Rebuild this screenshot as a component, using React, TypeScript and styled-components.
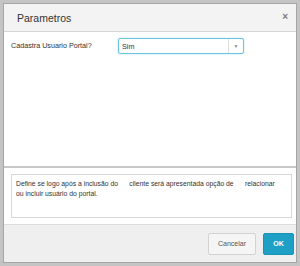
import React from "react";
import styled, { createGlobalStyle } from "styled-components";

const Global = createGlobalStyle`
  html, body { margin: 0; padding: 0; }
  body {
    background: #c4c4c4;
    font-family: "Liberation Sans", Arial, sans-serif;
    width: 300px;
    height: 266px;
    overflow: hidden;
  }
`;

const Dialog = styled.div`
  box-sizing: border-box;
  margin: 3px 0 0 3px;
  width: 294px;
  height: 260px;
  border: 1px solid #a6a6a6;
  display: flex;
  flex-direction: column;
  background: #fff;
`;

const Header = styled.div`
  box-sizing: border-box;
  height: 28px;
  flex: none;
  background: #f3f3f3;
  border-bottom: 1px solid #d6d6d6;
  display: flex;
  align-items: center;
  justify-content: space-between;
  padding: 0 8px 0 13px;
`;

const Title = styled.div`
  font-family: "Liberation Sans", Arial, sans-serif;
  font-size: 10.5px;
  color: #333;
`;

const Close = styled.div`
  font-size: 10px;
  font-weight: bold;
  color: #7a7a7a;
  line-height: 1;
  margin-top: -2px;
`;

const Body = styled.div`
  box-sizing: border-box;
  height: 136px;
  flex: none;
  padding: 6px 7px;
  border-bottom: 2px solid #c9c9c9;
`;

const Row = styled.div`
  display: flex;
  align-items: flex-start;
`;

const Label = styled.div`
  width: 107px;
  font-size: 7.2px;
  color: #333;
  padding-top: 3px;
`;

const Select = styled.div`
  box-sizing: border-box;
  width: 126px;
  height: 16px;
  border: 1px solid #6ac6e0;
  border-radius: 2px;
  box-shadow: 0 0 2px rgba(102, 197, 223, 0.5);
  display: flex;
  align-items: stretch;
  background: #fff;
`;

const SelectValue = styled.div`
  flex: 1;
  font-size: 7.2px;
  color: #333;
  display: flex;
  align-items: center;
  padding-left: 3px;
`;

const SelectArrow = styled.div`
  width: 14px;
  border-left: 1px solid #dedede;
  display: flex;
  align-items: center;
  justify-content: center;
  color: #888;
  font-size: 5px;
`;

const HelpArea = styled.div`
  box-sizing: border-box;
  height: 56px;
  flex: none;
  padding: 6px 4px 5px 7px;
`;

const HelpBox = styled.div`
  box-sizing: border-box;
  height: 44px;
  border: 1px solid #d8d8d8;
  padding: 4px 4px;
  font-size: 6.8px;
  line-height: 9.5px;
  color: #333;
  white-space: pre-wrap;
`;

const Footer = styled.div`
  box-sizing: border-box;
  flex: 1;
  background: #efefef;
  border-top: 1px solid #dcdcdc;
  display: flex;
  align-items: center;
  justify-content: flex-end;
  gap: 7px;
  padding: 0 2px 0 0;
`;

const Button = styled.div<{ $primary?: boolean }>`
  box-sizing: border-box;
  height: 22px;
  width: ${(p) => (p.$primary ? "31px" : "48px")};
  display: flex;
  align-items: center;
  justify-content: center;
  font-size: 7px;
  border-radius: 2px;
  background: ${(p) => (p.$primary ? "#1ea0c6" : "#f5f5f5")};
  color: ${(p) => (p.$primary ? "#fff" : "#555")};
  border: 1px solid ${(p) => (p.$primary ? "#1b93b6" : "#d3d3d3")};
  font-weight: ${(p) => (p.$primary ? "bold" : "normal")};
`;

export default function App() {
  return (
    <>
      <Global />
      <Dialog>
        <Header>
          <Title>Parametros</Title>
          <Close>×</Close>
        </Header>
        <Body>
          <Row>
            <Label>Cadastra Usuario Portal?</Label>
            <Select>
              <SelectValue>Sim</SelectValue>
              <SelectArrow>▼</SelectArrow>
            </Select>
          </Row>
        </Body>
        <HelpArea>
          <HelpBox>
            {"Define se logo após a inclusão do      cliente será apresentada opção de      relacionar\nou incluir usuário do portal."}
          </HelpBox>
        </HelpArea>
        <Footer>
          <Button>Cancelar</Button>
          <Button $primary>OK</Button>
        </Footer>
      </Dialog>
    </>
  );
}
